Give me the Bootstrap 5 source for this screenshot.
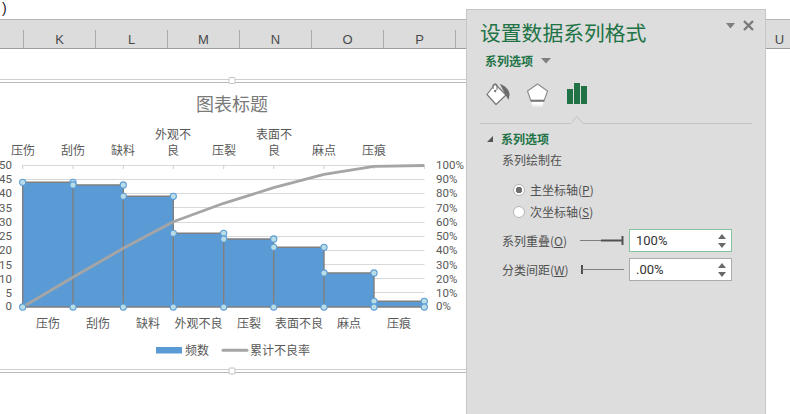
<!DOCTYPE html>
<html lang="zh">
<head>
<meta charset="utf-8">
<title>设置数据系列格式</title>
<link href="https://cdn.jsdelivr.net/npm/bootstrap@5.3.0/dist/css/bootstrap.min.css" rel="stylesheet">
<style>
html,body{margin:0;height:414px;overflow:hidden;background:#fff}
body{font-family:"Noto Sans CJK SC","Liberation Sans",sans-serif;font-size:12px;color:#444}
.xl-stage{width:790px;height:414px;overflow:hidden}
.xl-formula{height:19px;padding-left:2px;font:14px/16px "Liberation Sans",sans-serif;color:#222}
.xl-head{height:30px;background:#dcdcdc;border-top:1px solid #b4b4b4;border-bottom:1px solid #9c9c9c;padding-left:24px;overflow:hidden}
.xl-col{flex:0 0 72px;height:18px;margin-top:10px;border-right:1px solid #ababab;text-align:center;font:13px/20px "Liberation Sans",sans-serif;color:#4a4a4a}
.xl-first{flex:0 0 1px;height:18px;margin:10px 0 0 -1px;background:#ababab}
.xl-sheet{display:block;width:466px;height:365px}
.xl-sheet text{font-family:"Noto Sans CJK SC",sans-serif;font-size:12px;fill:#595959}
.xl-sheet .num{font-family:"Roboto",sans-serif;font-size:11.5px}
.xl-sheet .ttl{font-size:18px;fill:#7a7a7a}
.pane{left:466px;top:9px;width:300px;height:405px;background:#dddddd;border:1px solid #c6c6c6;border-bottom:0;padding:0 13px}
.pane-top{height:42px;padding-top:4px}
.pane-title{font-size:20.8px;line-height:36px;color:#217346}
.pane-ctrl{top:10px;right:11px}
.pane-sub{height:18px;padding-left:5px;color:#217346;font-weight:700}
.pane-icons{height:25px;margin-top:13px;padding-left:6px;gap:16px}
.pane-rule{height:18px;margin-top:6px;width:272px}
.pane-sec{height:16px;padding-left:7px;margin-top:-1px;color:#217346;font-weight:700;gap:8px}
.pane-body{padding-left:22px;color:#505050}
.pane-line{height:18px;line-height:18px;margin-top:4px}
.pane-gap{margin-top:10px}
.pane-opt{height:22px;padding-left:11px;gap:5px}
.pane-opt .form-check-input{width:12px;height:12px;margin:0;flex:none;background-color:#fff;border:1px solid #b5b5b5;box-shadow:none}
.pane-opt .form-check-input:checked{background-image:radial-gradient(circle,#6f6f6f 0 3px,transparent 3.4px);background-color:#fff;border-color:#b5b5b5}
.pane-row{height:29px}
.pane-first{margin-top:3px}
.pane-lab{width:78px;flex:none}
.pane-slider{width:49px;flex:none}
.pane-spin{width:103px;height:23px;flex:none;background:#fff;border:1px solid #ababab;padding:0 5px 0 6px}
.pane-spin.on{border-color:#84c39e}
.pane-spin input{width:70px;border:0;padding:0;background:transparent;font:13px/20px "Roboto",sans-serif;color:#333;outline:0}
u{text-decoration-thickness:1px;text-underline-offset:1px}
</style>
</head>
<body>
<div class="xl-stage position-relative">
  <div class="xl-formula">)</div>
  <div class="xl-head d-flex">
    <div class="xl-first"></div>
    <div class="xl-col">K</div><div class="xl-col">L</div><div class="xl-col">M</div><div class="xl-col">N</div><div class="xl-col">O</div><div class="xl-col">P</div><div class="xl-col"></div><div class="xl-col"></div><div class="xl-col"></div><div class="xl-col"></div><div class="xl-col">U</div>
  </div>

  <svg class="xl-sheet" viewBox="0 49 466 365" xmlns="http://www.w3.org/2000/svg">
    <g stroke="#c9c9c9" fill="none">
      <path d="M0 79.5H466M0 369.5H466" stroke="#cfcfcf"/>
      <path d="M0 82.5H466M0 372.5H466" stroke="#b9b9b9"/>
    </g>
    <rect x="229" y="77.5" width="6" height="6" rx="1" fill="#fff" stroke="#c2c2c2"/>
    <rect x="229" y="368" width="6" height="6" rx="1" fill="#fff" stroke="#c2c2c2"/>

    <text class="ttl" x="232" y="111" text-anchor="middle">图表标题</text>

    <g text-anchor="middle">
      <text x="23" y="155">压伤</text><text x="73" y="155">刮伤</text><text x="123" y="155">缺料</text>
      <text x="173" y="139">外观不</text><text x="173" y="155">良</text>
      <text x="224" y="155">压裂</text>
      <text x="274" y="139">表面不</text><text x="274" y="155">良</text>
      <text x="324" y="155">麻点</text><text x="374" y="155">压痕</text>
    </g>

    <path d="M22.7 165.5H424.5M22.7 179.5H424.5M22.7 193.5H424.5M22.7 207.5H424.5M22.7 222.5H424.5M22.7 236.5H424.5M22.7 250.5H424.5M22.7 264.5H424.5M22.7 278.5H424.5M22.7 292.5H424.5" stroke="#d9d9d9" fill="none"/>
    <path d="M22.7 165V169M73 165V169M123.3 165V169M173.3 165V169M223.7 165V169M273.7 165V169M324 165V169M374 165V169M424.3 165V169" stroke="#d0d0d0" fill="none"/>

    <g text-anchor="end">
      <text class="num" x="12" y="169">50</text><text class="num" x="12" y="183">45</text><text class="num" x="12" y="197">40</text><text class="num" x="12" y="212">35</text><text class="num" x="12" y="226">30</text><text class="num" x="12" y="240">25</text><text class="num" x="12" y="254">20</text><text class="num" x="12" y="269">15</text><text class="num" x="12" y="283">10</text><text class="num" x="12" y="297">5</text><text class="num" x="12" y="310">0</text>
    </g>
    <g>
      <text class="num" x="436" y="169">100%</text><text class="num" x="436" y="183">90%</text><text class="num" x="436" y="197">80%</text><text class="num" x="436" y="212">70%</text><text class="num" x="436" y="226">60%</text><text class="num" x="436" y="240">50%</text><text class="num" x="436" y="254">40%</text><text class="num" x="436" y="269">30%</text><text class="num" x="436" y="283">20%</text><text class="num" x="436" y="297">10%</text><text class="num" x="436" y="310">0%</text>
    </g>

    <g fill="#5b9bd5">
      <rect x="22.7" y="182.3" width="50.3" height="124.7"/>
      <rect x="73" y="185" width="50.3" height="122"/>
      <rect x="123.3" y="196.3" width="50" height="110.7"/>
      <rect x="173.3" y="233.3" width="50.4" height="73.7"/>
      <rect x="223.7" y="239" width="50" height="68"/>
      <rect x="273.7" y="247.3" width="50.3" height="59.7"/>
      <rect x="324" y="273" width="50" height="34"/>
      <rect x="374" y="301.3" width="50.3" height="5.7"/>
    </g>
    <path d="M22.7 307V182.3H73M73 307V185H123.3M123.3 307V196.3H173.3M173.3 307V233.3H223.7M223.7 307V239H273.7M273.7 307V247.3H324M324 307V273H374M374 307V301.3H424.3V307M22.7 307H424.3M73 182.3V185M123.3 185V196.3M173.3 196.3V233.3M223.7 233.3V239M273.7 239V247.3M324 247.3V273M374 273V301.3" fill="none" stroke="#7f7f7f" stroke-width="1.4"/>

    <polyline points="22.7,307 73,277.3 123.3,248.3 173.3,221.7 223.7,203.3 273.7,187.7 324,174.3 374,166.3 424.3,165.5" fill="none" stroke="#a5a5a5" stroke-width="2.8" stroke-linejoin="round"/>

    <g fill="#b8dde6" stroke="#5b9bd5" stroke-width="1.1">
      <circle cx="22.7" cy="182.3" r="3.1"/><circle cx="73" cy="182.3" r="3.1"/><circle cx="73" cy="185" r="3.1"/><circle cx="123.3" cy="185" r="3.1"/><circle cx="123.3" cy="196.3" r="3.1"/><circle cx="173.3" cy="196.3" r="3.1"/><circle cx="173.3" cy="233.3" r="3.1"/><circle cx="223.7" cy="233.3" r="3.1"/><circle cx="223.7" cy="239" r="3.1"/><circle cx="273.7" cy="239" r="3.1"/><circle cx="273.7" cy="247.3" r="3.1"/><circle cx="324" cy="247.3" r="3.1"/><circle cx="324" cy="273" r="3.1"/><circle cx="374" cy="273" r="3.1"/><circle cx="374" cy="301.3" r="3.1"/><circle cx="424.3" cy="301.3" r="3.1"/>
      <circle cx="22.7" cy="307" r="3.1"/><circle cx="73" cy="307" r="3.1"/><circle cx="123.3" cy="307" r="3.1"/><circle cx="173.3" cy="307" r="3.1"/><circle cx="223.7" cy="307" r="3.1"/><circle cx="273.7" cy="307" r="3.1"/><circle cx="324" cy="307" r="3.1"/><circle cx="374" cy="307" r="3.1"/><circle cx="424.3" cy="307" r="3.1"/>
    </g>

    <g text-anchor="middle">
      <text x="48" y="328">压伤</text><text x="98" y="328">刮伤</text><text x="148" y="328">缺料</text><text x="198.5" y="328">外观不良</text><text x="249" y="328">压裂</text><text x="299" y="328">表面不良</text><text x="349" y="328">麻点</text><text x="399" y="328">压痕</text>
    </g>

    <rect x="156" y="347" width="26" height="6.5" fill="#5b9bd5"/>
    <text x="185" y="355">频数</text>
    <path d="M223 350.3H247" stroke="#a5a5a5" stroke-width="3" stroke-linecap="round"/>
    <text x="250" y="355">累计不良率</text>
  </svg>

  <aside class="pane position-absolute">
    <div class="pane-ctrl position-absolute d-flex align-items-center gap-2">
      <svg width="9" height="6" viewBox="0 0 9 6"><path d="M0 0H9L4.5 5.5Z" fill="#7f7f7f"/></svg>
      <svg width="11" height="11" viewBox="0 0 11 11"><path d="M1 1L10 10M10 1L1 10" stroke="#7a7a7a" stroke-width="2.4"/></svg>
    </div>
    <div class="pane-top"><div class="pane-title">设置数据系列格式</div></div>
    <div class="pane-sub d-flex align-items-center gap-2">系列选项
      <svg width="10" height="6" viewBox="0 0 10 6"><path d="M0 0H10L5 5.5Z" fill="#7f7f7f"/></svg>
    </div>
    <div class="pane-icons d-flex align-items-start">
      <svg width="25" height="24" viewBox="0 0 25 24">
        <path d="M14 1C18 2 24 7 23.5 12L22.5 17L19 11Z" fill="#6b6b6b"/>
        <path d="M9 1L20 12L10 21.5L1 11.5Z" fill="#fff" stroke="#777" stroke-width="1.2" stroke-linejoin="round"/>
        <path d="M7 6V3C7 0.5 11 0.5 11 3V7" fill="none" stroke="#777" stroke-width="1.1"/>
        <circle cx="9.2" cy="8" r="1.2" fill="#777"/>
      </svg>
      <svg width="24" height="25" viewBox="0 0 24 25">
        <defs><linearGradient id="fadeg" x1="0" x2="0" y1="0" y2="1"><stop offset="0.35" stop-color="#fff"/><stop offset="1" stop-color="#e6e6e6"/></linearGradient></defs>
        <path d="M4.2 18L5.5 24H15.5L16.8 18Z" fill="url(#fadeg)"/>
        <path d="M10.5 1L20.5 8L17 18H4L0.5 8Z" fill="#fff" stroke="#8a8a8a" stroke-width="1.1" stroke-linejoin="round"/>
        <path d="M4 17.7H17" stroke="#777" stroke-width="2"/>
      </svg>
      <svg width="21" height="21" viewBox="0 0 21 21">
        <rect x="0" y="6" width="6" height="15" fill="#217346"/><rect x="7" y="0" width="6" height="21" fill="#217346"/><rect x="14" y="3" width="6" height="18" fill="#217346"/>
      </svg>
    </div>
    <svg class="pane-rule d-block" viewBox="0 0 272 18"><path d="M0 9.5H91L97 2.5L103 9.5H272" fill="none" stroke="#c4c4c4"/></svg>
    <div class="pane-sec d-flex align-items-center">
      <svg width="6" height="6" viewBox="0 0 6 6"><path d="M6 0V6H0Z" fill="#555"/></svg>系列选项
    </div>
    <div class="pane-body">
      <div class="pane-line">系列绘制在</div>
      <div class="pane-opt pane-gap d-flex align-items-center"><input class="form-check-input" type="radio" name="axis" checked><span>主坐标轴(<u>P</u>)</span></div>
      <div class="pane-opt d-flex align-items-center"><input class="form-check-input" type="radio" name="axis"><span>次坐标轴(<u>S</u>)</span></div>
      <div class="pane-row pane-first d-flex align-items-center">
        <span class="pane-lab">系列重叠(<u>O</u>)</span>
        <svg class="pane-slider" height="9" viewBox="0 0 49 9"><path d="M0 4.5H22" stroke="#808080"/><path d="M21 4.5H43" stroke="#505050" stroke-width="2"/><path d="M42.5 0V9" stroke="#505050" stroke-width="2"/></svg>
        <div class="pane-spin on d-flex align-items-center"><input type="text" value="100%"><svg class="ms-auto" width="8" height="16" viewBox="0 0 8 16"><path d="M4 1L8 6H0ZM0 10H8L4 15Z" fill="#6a6a6a"/></svg></div>
      </div>
      <div class="pane-row d-flex align-items-center">
        <span class="pane-lab">分类间距(<u>W</u>)</span>
        <svg class="pane-slider" height="9" viewBox="0 0 49 9"><path d="M2 0V9" stroke="#505050" stroke-width="2"/><path d="M2 4.5H44" stroke="#808080"/></svg>
        <div class="pane-spin d-flex align-items-center"><input type="text" value=".00%"><svg class="ms-auto" width="8" height="16" viewBox="0 0 8 16"><path d="M4 1L8 6H0ZM0 10H8L4 15Z" fill="#6a6a6a"/></svg></div>
      </div>
    </div>
  </aside>
</div>
<script src="https://cdn.jsdelivr.net/npm/bootstrap@5.3.0/dist/js/bootstrap.bundle.min.js"></script>
</body>
</html>
